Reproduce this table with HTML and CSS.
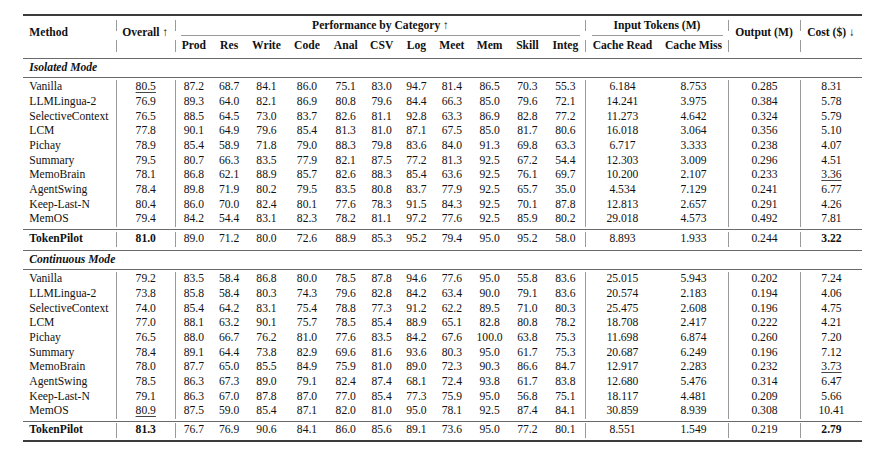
FILE: index.html
```html
<!DOCTYPE html>
<html lang="en">
<head>
<meta charset="utf-8">
<title>Results</title>
<link rel="stylesheet" href="styles.css">
</head>
<body>
<table class="results">
  <colgroup>
    <col class="c-method"><col class="c-overall">
    <col class="c-prod"><col class="c-res"><col class="c-write"><col class="c-code"><col class="c-anal"><col class="c-csv"><col class="c-log"><col class="c-meet"><col class="c-mem"><col class="c-skill"><col class="c-integ">
    <col class="c-read"><col class="c-miss"><col class="c-out"><col class="c-cost">
  </colgroup>
  <tbody>
    <tr class="rule heavy top"><td colspan="17"><div></div></td></tr>
    <tr class="h1">
      <th rowspan="3" class="multi left">Method</th>
      <th rowspan="3" class="multi vsplit">Overall <span class="arr">↑</span></th>
      <th colspan="11" class="vl">Performance by Category <span class="arr">↑</span></th>
      <th colspan="2" class="vl">Input Tokens (M)</th>
      <th rowspan="3" class="multi vsplit">Output (M)</th>
      <th rowspan="3" class="multi vsplit">Cost ($) <span class="arr">↓</span></th>
    </tr>
    <tr class="cmid">
      <td colspan="11" class="cm-perf"><div></div></td>
      <td colspan="2" class="cm-input"><div></div></td>
    </tr>
    <tr class="h2">
      <th class="vl">Prod</th><th>Res</th><th>Write</th><th>Code</th><th>Anal</th><th>CSV</th><th>Log</th><th>Meet</th><th>Mem</th><th>Skill</th><th>Integ</th>
      <th class="vl">Cache Read</th><th>Cache Miss</th>
    </tr>
    <tr class="rule hd"><td colspan="17"><div></div></td></tr>
    <tr class="section"><th colspan="17">Isolated Mode</th></tr>
    <tr class="rule"><td colspan="17"><div></div></td></tr>

    <tr class="d"><td>Vanilla</td><td><span class="u">80.5</span></td><td>87.2</td><td>68.7</td><td>84.1</td><td>86.0</td><td>75.1</td><td>83.0</td><td>94.7</td><td>81.4</td><td>86.5</td><td>70.3</td><td>55.3</td><td>6.184</td><td>8.753</td><td>0.285</td><td>8.31</td></tr>
    <tr class="d"><td>LLMLingua-2</td><td>76.9</td><td>89.3</td><td>64.0</td><td>82.1</td><td>86.9</td><td>80.8</td><td>79.6</td><td>84.4</td><td>66.3</td><td>85.0</td><td>79.6</td><td>72.1</td><td>14.241</td><td>3.975</td><td>0.384</td><td>5.78</td></tr>
    <tr class="d"><td>SelectiveContext</td><td>76.5</td><td>88.5</td><td>64.5</td><td>73.0</td><td>83.7</td><td>82.6</td><td>81.1</td><td>92.8</td><td>63.3</td><td>86.9</td><td>82.8</td><td>77.2</td><td>11.273</td><td>4.642</td><td>0.324</td><td>5.79</td></tr>
    <tr class="d"><td>LCM</td><td>77.8</td><td>90.1</td><td>64.9</td><td>79.6</td><td>85.4</td><td>81.3</td><td>81.0</td><td>87.1</td><td>67.5</td><td>85.0</td><td>81.7</td><td>80.6</td><td>16.018</td><td>3.064</td><td>0.356</td><td>5.10</td></tr>
    <tr class="d"><td>Pichay</td><td>78.9</td><td>85.4</td><td>58.9</td><td>71.8</td><td>79.0</td><td>88.3</td><td>79.8</td><td>83.6</td><td>84.0</td><td>91.3</td><td>69.8</td><td>63.3</td><td>6.717</td><td>3.333</td><td>0.238</td><td>4.07</td></tr>
    <tr class="d"><td>Summary</td><td>79.5</td><td>80.7</td><td>66.3</td><td>83.5</td><td>77.9</td><td>82.1</td><td>87.5</td><td>77.2</td><td>81.3</td><td>92.5</td><td>67.2</td><td>54.4</td><td>12.303</td><td>3.009</td><td>0.296</td><td>4.51</td></tr>
    <tr class="d"><td>MemoBrain</td><td>78.1</td><td>86.8</td><td>62.1</td><td>88.9</td><td>85.7</td><td>82.6</td><td>88.3</td><td>85.4</td><td>63.6</td><td>92.5</td><td>76.1</td><td>69.7</td><td>10.200</td><td>2.107</td><td>0.233</td><td><span class="u">3.36</span></td></tr>
    <tr class="d"><td>AgentSwing</td><td>78.4</td><td>89.8</td><td>71.9</td><td>80.2</td><td>79.5</td><td>83.5</td><td>80.8</td><td>83.7</td><td>77.9</td><td>92.5</td><td>65.7</td><td>35.0</td><td>4.534</td><td>7.129</td><td>0.241</td><td>6.77</td></tr>
    <tr class="d"><td>Keep-Last-N</td><td>80.4</td><td>86.0</td><td>70.0</td><td>82.4</td><td>80.1</td><td>77.6</td><td>78.3</td><td>91.5</td><td>84.3</td><td>92.5</td><td>70.1</td><td>87.8</td><td>12.813</td><td>2.657</td><td>0.291</td><td>4.26</td></tr>
    <tr class="d"><td>MemOS</td><td>79.4</td><td>84.2</td><td>54.4</td><td>83.1</td><td>82.3</td><td>78.2</td><td>81.1</td><td>97.2</td><td>77.6</td><td>92.5</td><td>85.9</td><td>80.2</td><td>29.018</td><td>4.573</td><td>0.492</td><td>7.81</td></tr>

    <tr class="rule"><td colspan="17"><div></div></td></tr>
    <tr class="d"><td class="b">TokenPilot</td><td class="b">81.0</td><td>89.0</td><td>71.2</td><td>80.0</td><td>72.6</td><td>88.9</td><td>85.3</td><td>95.2</td><td>79.4</td><td>95.0</td><td>95.2</td><td>58.0</td><td>8.893</td><td>1.933</td><td>0.244</td><td class="b">3.22</td></tr>
    <tr class="rule pre"><td colspan="17"><div></div></td></tr>
    <tr class="section"><th colspan="17">Continuous Mode</th></tr>
    <tr class="rule post"><td colspan="17"><div></div></td></tr>

    <tr class="d"><td>Vanilla</td><td>79.2</td><td>83.5</td><td>58.4</td><td>86.8</td><td>80.0</td><td>78.5</td><td>87.8</td><td>94.6</td><td>77.6</td><td>95.0</td><td>55.8</td><td>83.6</td><td>25.015</td><td>5.943</td><td>0.202</td><td>7.24</td></tr>
    <tr class="d"><td>LLMLingua-2</td><td>73.8</td><td>85.8</td><td>58.4</td><td>80.3</td><td>74.3</td><td>79.6</td><td>82.8</td><td>84.2</td><td>63.4</td><td>90.0</td><td>79.1</td><td>83.6</td><td>20.574</td><td>2.183</td><td>0.194</td><td>4.06</td></tr>
    <tr class="d"><td>SelectiveContext</td><td>74.0</td><td>85.4</td><td>64.2</td><td>83.1</td><td>75.4</td><td>78.8</td><td>77.3</td><td>91.2</td><td>62.2</td><td>89.5</td><td>71.0</td><td>80.3</td><td>25.475</td><td>2.608</td><td>0.196</td><td>4.75</td></tr>
    <tr class="d"><td>LCM</td><td>77.0</td><td>88.1</td><td>63.2</td><td>90.1</td><td>75.7</td><td>78.5</td><td>85.4</td><td>88.9</td><td>65.1</td><td>82.8</td><td>80.8</td><td>78.2</td><td>18.708</td><td>2.417</td><td>0.222</td><td>4.21</td></tr>
    <tr class="d"><td>Pichay</td><td>76.5</td><td>88.0</td><td>66.7</td><td>76.2</td><td>81.0</td><td>77.6</td><td>83.5</td><td>84.2</td><td>67.6</td><td>100.0</td><td>63.8</td><td>75.3</td><td>11.698</td><td>6.874</td><td>0.260</td><td>7.20</td></tr>
    <tr class="d"><td>Summary</td><td>78.4</td><td>89.1</td><td>64.4</td><td>73.8</td><td>82.9</td><td>69.6</td><td>81.6</td><td>93.6</td><td>80.3</td><td>95.0</td><td>61.7</td><td>75.3</td><td>20.687</td><td>6.249</td><td>0.196</td><td>7.12</td></tr>
    <tr class="d"><td>MemoBrain</td><td>78.0</td><td>87.7</td><td>65.0</td><td>85.5</td><td>84.9</td><td>75.9</td><td>81.0</td><td>89.0</td><td>72.3</td><td>90.3</td><td>86.6</td><td>84.7</td><td>12.917</td><td>2.283</td><td>0.232</td><td><span class="u">3.73</span></td></tr>
    <tr class="d"><td>AgentSwing</td><td>78.5</td><td>86.3</td><td>67.3</td><td>89.0</td><td>79.1</td><td>82.4</td><td>87.4</td><td>68.1</td><td>72.4</td><td>93.8</td><td>61.7</td><td>83.8</td><td>12.680</td><td>5.476</td><td>0.314</td><td>6.47</td></tr>
    <tr class="d"><td>Keep-Last-N</td><td>79.1</td><td>86.3</td><td>67.0</td><td>87.8</td><td>87.0</td><td>77.0</td><td>85.4</td><td>77.3</td><td>75.9</td><td>95.0</td><td>56.8</td><td>75.1</td><td>18.117</td><td>4.481</td><td>0.209</td><td>5.66</td></tr>
    <tr class="d"><td>MemOS</td><td><span class="u">80.9</span></td><td>87.5</td><td>59.0</td><td>85.4</td><td>87.1</td><td>82.0</td><td>81.0</td><td>95.0</td><td>78.1</td><td>92.5</td><td>87.4</td><td>84.1</td><td>30.859</td><td>8.939</td><td>0.308</td><td>10.41</td></tr>

    <tr class="rule tight"><td colspan="17"><div></div></td></tr>
    <tr class="d"><td class="b">TokenPilot</td><td class="b">81.3</td><td>76.7</td><td>76.9</td><td>90.6</td><td>84.1</td><td>86.0</td><td>85.6</td><td>89.1</td><td>73.6</td><td>95.0</td><td>77.2</td><td>80.1</td><td>8.551</td><td>1.549</td><td>0.219</td><td class="b">2.79</td></tr>
    <tr class="rule heavy bottom"><td colspan="17"><div></div></td></tr>
  </tbody>
</table>
</body>
</html>
```

FILE: styles.css
```css
html, body {
  margin: 0;
  background: #ffffff;
}

body {
  padding: 14px 0 0 23px;
  font-family: "Liberation Serif", "Times New Roman", serif;
  font-size: 11.6px;
  line-height: 14.67px;
  color: #111111;
}

.results {
  border-collapse: separate;
  border-spacing: 0;
  table-layout: fixed;
  width: 839px;
}

.c-method { width: 92.5px; }
.c-overall { width: 59.5px; }
.c-prod { width: 36.75px; }
.c-res { width: 34.75px; }
.c-write { width: 40px; }
.c-code { width: 41px; }
.c-anal { width: 36.5px; }
.c-csv { width: 35.35px; }
.c-log { width: 34.25px; }
.c-meet { width: 36.65px; }
.c-mem { width: 38.75px; }
.c-skill { width: 36.85px; }
.c-integ { width: 39.15px; }
.c-read { width: 74px; }
.c-miss { width: 69px; }
.c-out { width: 72px; }
.c-cost { width: 62px; }

.results td,
.results th {
  padding: 0;
  text-align: center;
  white-space: nowrap;
  font-weight: normal;
}

.results th {
  font-weight: bold;
}

.results .arr {
  font-weight: normal;
}

/* rules (booktabs style) */
.rule td {
  padding: 2px 0;
  line-height: 0;
}

.rule div {
  height: 1px;
  background: #6a6a6a;
}

.rule.heavy div {
  height: 2px;
  background: #3c3c3c;
}

.rule.top td { padding: 0 0 4px; }
.rule.bottom td { padding: 2px 0 0; }
.rule.hd td { padding: 5.5px 0 2px; }
.rule.pre td { padding: 3px 0 2px; }
.rule.post td { padding: 2px 0 2.5px; }
.rule.tight td { padding: 1.6px 0 1.7px; }

/* header */
.h1 th {
  line-height: 11.4px;
}

.h2 th {
  line-height: 11.4px;
  padding-bottom: 1px;
}

.results th.multi {
  vertical-align: top;
  padding-top: 6px;
  line-height: 14px;
}

.results th.left {
  text-align: left;
  padding-left: 6.3px;
}

.vsplit {
  background:
    linear-gradient(#9a9a9a, #9a9a9a) left top / 1px 11.4px no-repeat,
    linear-gradient(#9a9a9a, #9a9a9a) left bottom / 1px 12.4px no-repeat;
}

.vl {
  border-left: 1px solid #9a9a9a;
}

.cmid td {
  vertical-align: top;
  line-height: 0;
}

.cmid td.cm-perf { padding: 3.8px 5px 3.8px 6px; }
.cmid td.cm-input { padding: 3.8px 5px 3.8px 7px; }

.cmid div {
  height: 1px;
  background: #9a9a9a;
}

/* section labels */
.section th {
  line-height: 14.3px;
  text-align: left;
  padding-left: 6.3px;
  font-style: italic;
}

/* data rows */
.d td {
  line-height: 14.67px;
}

.d td:first-child {
  text-align: left;
  padding-left: 6.3px;
}

.d td:nth-child(2),
.d td:nth-child(3),
.d td:nth-child(14),
.d td:nth-child(16),
.d td:nth-child(17) {
  border-left: 1px solid #9a9a9a;
}

.results .b {
  font-weight: bold;
}

.u {
  text-decoration: underline;
  text-decoration-thickness: 1px;
  text-underline-offset: 2px;
  text-decoration-color: #444444;
}
```
